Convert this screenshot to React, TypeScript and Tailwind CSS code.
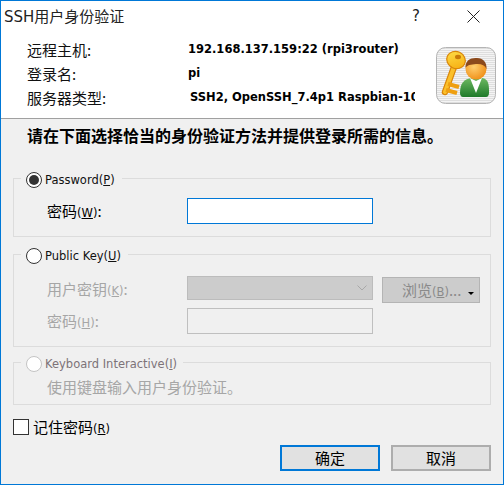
function Radio({ checked, disabled }: { checked?: boolean; disabled?: boolean }) {
  return (
    <span className={`flex h-4 w-4 shrink-0 items-center justify-center rounded-full border bg-white ${disabled ? "border-[#c4c4c4]" : "border-[#333333]"}`}>
      {checked && <span className="h-2.5 w-2.5 rounded-full bg-[#333333]" />}
    </span>
  );
}

function Key({ k }: { k: string }) {
  return (
    <span className="font-['DejaVu_Sans'] text-[11.5px]">
      (<u>{k}</u>)
    </span>
  );
}

function KeyIcon() {
  return (
    <svg width="60" height="57" viewBox="0 0 60 57" className="shrink-0">
      <defs>
        <pattern id="st" width="2" height="2" patternUnits="userSpaceOnUse">
          <rect width="2" height="1" fill="#f4f4f4" />
          <rect y="1" width="2" height="1" fill="#dedede" />
        </pattern>
        <linearGradient id="gold" x1="0" y1="0" x2="1" y2="1">
          <stop offset="0" stopColor="#ffe04a" />
          <stop offset="1" stopColor="#f5a90c" />
        </linearGradient>
        <linearGradient id="shirt" x1="0" y1="0" x2="0" y2="1">
          <stop offset="0" stopColor="#6cb860" />
          <stop offset="1" stopColor="#1f7a2a" />
        </linearGradient>
        <radialGradient id="face" cx="0.4" cy="0.4" r="0.7">
          <stop offset="0" stopColor="#ffcf70" />
          <stop offset="1" stopColor="#ee8a10" />
        </radialGradient>
      </defs>
      <rect x="0.5" y="0.5" width="59" height="56" rx="9" fill="url(#st)" stroke="#b4b4b4" />
      <path d="M18 20 L9 45" stroke="#d9860a" strokeWidth="6.5" strokeLinecap="round" />
      <path d="M18 20 L9 45" stroke="#fbc02a" strokeWidth="4" strokeLinecap="round" />
      <path d="M12 37 L23 40 M10 43 L21 46" stroke="#ef9f10" strokeWidth="4" />
      <ellipse cx="20" cy="13" rx="9.5" ry="8.5" fill="url(#gold)" stroke="#d9860a" strokeWidth="1.2" transform="rotate(25 20 13)" />
      <ellipse cx="22" cy="10" rx="3" ry="2.2" fill="#c97a08" />
      <path d="M24 46 C24 36 28 32 36 31 L46 31 C53 32 53 38 53 46 C53 48 52 50 50 50 L27 50 C25 50 24 48 24 46Z" fill="url(#shirt)" />
      <path d="M34 31 L40 46 L46 31 L40 34Z" fill="#ffffff" />
      <circle cx="40" cy="22" r="10.5" fill="url(#face)" />
      <path d="M29.5 21 C29 13 35 10.5 41 11 C47 11 51 15 50.5 22 C49 18 45 16.5 40 17 C35 17.5 31 18 29.5 21Z" fill="#8c4a1c" />
    </svg>
  );
}

function InfoRow({ label, value, clip }: { label: string; value: string; clip?: boolean }) {
  return (
    <div className="flex h-6 items-center">
      <span className="w-[161px] shrink-0 text-[15px] text-[#111111]">{label}</span>
      <span className={`overflow-hidden whitespace-nowrap font-['DejaVu_Sans'] text-[11.5px] font-bold text-black ${clip ? "ml-[2px] w-[225px]" : ""}`}>{value}</span>
    </div>
  );
}

const legendBase = "ml-[7px] flex h-[12px] items-start gap-[3px] pl-[5px] font-['DejaVu_Sans'] text-[11.5px] leading-[16px]";

export default function App() {
  return (
    <div className="flex h-[485px] w-[504px] flex-col overflow-hidden border border-[#0078d7] bg-[#f0f0f0] font-['Noto_Sans_CJK_SC',sans-serif] text-black">
      <div className="bg-white">
        <div className="flex h-[31px] items-center pl-[3px]">
          <span className="flex-1 text-[15px] text-[#222222]">
            <span className="font-['DejaVu_Sans']">SSH</span>用户身份验证
          </span>
          <span className="mr-[47px] font-['DejaVu_Sans'] text-[15px] text-[#222222]">?</span>
          <svg width="13" height="13" viewBox="0 0 13 13" className="mr-[23px]">
            <path d="M0.5 0.5 L12.5 12.5 M12.5 0.5 L0.5 12.5" stroke="#222222" strokeWidth="1" fill="none" />
          </svg>
        </div>
        <div className="flex h-[87px] border-b border-[#a0a0a0] pl-[26px] pt-[6px]">
          <div className="w-[409px] shrink-0">
            <InfoRow label="远程主机:" value="192.168.137.159:22 (rpi3router)" />
            <InfoRow label="登录名:" value="pi" />
            <InfoRow label="服务器类型:" value="SSH2, OpenSSH_7.4p1 Raspbian-10" clip />
          </div>
          <div className="pt-[9px]">
            <KeyIcon />
          </div>
        </div>
      </div>

      <div className="flex-1 px-[12px]">
        <p className="ml-[14px] mt-[5px] h-[22px] whitespace-nowrap text-[16px] font-bold leading-[22px]">请在下面选择恰当的身份验证方法并提供登录所需的信息。</p>

        <fieldset className="mt-[26px] h-[65px] w-[478px] border border-[#dcdcdc]">
          <legend className={`${legendBase} pr-[7px] text-[#111111]`}>
            <Radio checked />
            <span>Password<Key k="P" /></span>
          </legend>
          <div className="ml-[33px] mt-[14px] flex h-[26px] items-center">
            <span className="w-[140px] shrink-0 text-[15px]">密码<Key k="W" />:</span>
            <div className="h-[26px] w-[186px] border border-[#0078d7] bg-white" />
          </div>
        </fieldset>

        <fieldset className="mt-[11px] h-[99px] w-[478px] border border-[#dcdcdc] text-[#a6a6a6]">
          <legend className={`${legendBase} pr-[7px] text-[#111111]`}>
            <Radio />
            <span>Public Key<Key k="U" /></span>
          </legend>
          <div className="ml-[33px] mt-[16px] flex items-start">
            <span className="w-[140px] shrink-0 pt-[2px] text-[15px]">用户密钥<Key k="K" />:</span>
            <div className="flex h-[24px] w-[186px] items-center justify-end border border-[#bcbcbc] bg-[#cccccc] pr-[5px]">
              <svg width="10" height="6" viewBox="0 0 10 6"><path d="M0.5 0.5 L5 5 L9.5 0.5" fill="none" stroke="#a8a8a8" /></svg>
            </div>
            <div className="ml-[9px] mt-[1px] flex h-[26px] w-[98px] items-center border border-[#b4b4b4] bg-[#cccccc] pl-[19px] text-[15px] text-[#8a8a8a]">
              <span className="flex-1">浏览<Key k="B" />...</span>
              <span className="mr-[5px] mt-[6px] h-0 w-0 border-x-[3px] border-t-[3px] border-x-transparent border-t-black" />
            </div>
          </div>
          <div className="ml-[33px] mt-[5px] flex items-center">
            <span className="w-[140px] shrink-0 text-[15px]">密码<Key k="H" />:</span>
            <div className="h-[26px] w-[186px] border border-[#bfbfbf] bg-[#f0f0f0]" />
          </div>
        </fieldset>

        <fieldset className="mt-[9px] h-[49px] w-[478px] border border-[#dcdcdc] text-[#a6a6a6]">
          <legend className={`${legendBase} pr-[6px] text-[#7d7378]`}>
            <Radio disabled />
            <span>Keyboard Interactive<Key k="I" /></span>
          </legend>
          <p className="ml-[33px] mt-[8px] text-[15px] leading-[22px]">使用键盘输入用户身份验证。</p>
        </fieldset>

        <div className="mt-[14px] flex h-4 items-center gap-[4px]">
          <span className="h-4 w-4 border border-[#333333] bg-white" />
          <span className="text-[15px]">记住密码<Key k="R" /></span>
        </div>

        <div className="mt-[10px] flex justify-end gap-[11px]">
          <button className="h-[26px] w-[100px] border-2 border-[#0078d7] bg-[#e1e1e1] text-[15px]">确定</button>
          <button className="h-[26px] w-[100px] border-2 border-[#adadad] bg-[#e1e1e1] text-[15px]">取消</button>
        </div>
      </div>
    </div>
  );
}
